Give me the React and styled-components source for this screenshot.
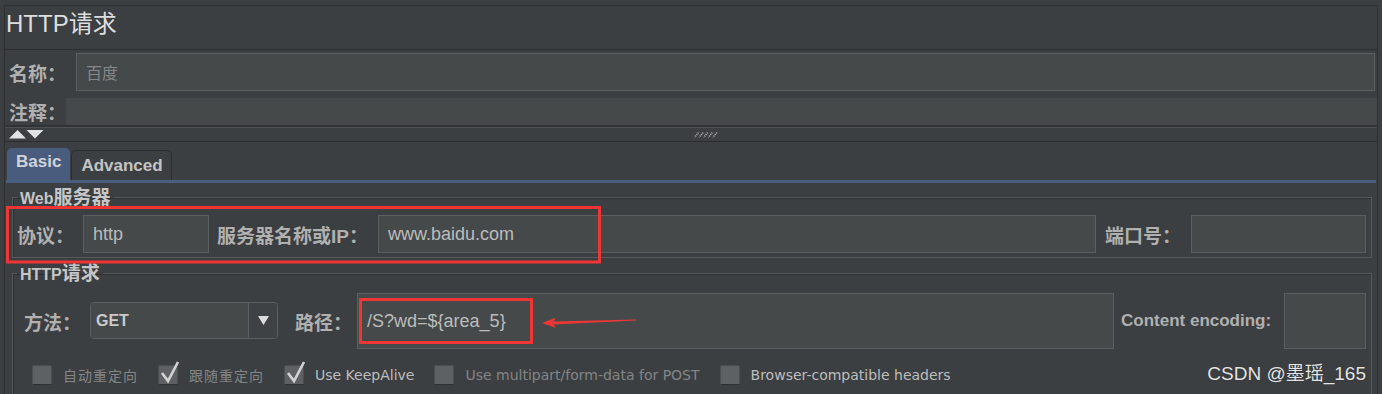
import React from 'react';
import styled, { createGlobalStyle } from 'styled-components';

const SANS = `"Liberation Sans", "Noto Sans CJK SC", sans-serif`;
const DEJA = `"DejaVu Sans", "Noto Sans CJK SC", sans-serif`;

const Global = createGlobalStyle`
  html, body { margin: 0; padding: 0; background: #3c3f41; }
  #root { width: 1382px; height: 394px; overflow: hidden; }
  *, *::before, *::after { box-sizing: border-box; }
`;

const Root = styled.div`
  position: relative;
  width: 1382px;
  height: 394px;
  overflow: hidden;
  background: #3c3f41;
  padding: 5px 4px 0 4px;
  font-family: ${SANS};
  color: #bbbbbb;
`;

const Frame = styled.div`
  height: 100%;
  border-top: 1px solid #2d2f31;
  border-left: 1px solid #2d2f31;
  border-right: 1px solid #2d2f31;
`;

const Title = styled.h1`
  margin: 0;
  height: 43px;
  padding: 0 0 7px 1px;
  font-size: 24px;
  line-height: 36px;
  font-weight: normal;
  color: #dedede;
`;

const NamePanel = styled.div`
  display: flex;
  flex-direction: column;
  gap: 7px;
  padding: 3px 0 0;
  border-top: 1px solid #2c2e30;
  border-bottom: 2px solid #303234;
  box-shadow: 0 1px 0 #4e5153;
`;

const NameRow = styled.div`
  display: flex;
  height: ${(p) => p.$h}px;
  padding-right: ${(p) => p.$pr || 0}px;
`;

const Label = styled.label`
  flex: none;
  width: ${(p) => p.$w}px;
  margin-left: ${(p) => p.$ml || 0}px;
  padding-left: ${(p) => p.$pl || 0}px;
  display: flex;
  align-items: center;
  font-size: ${(p) => p.$fs || 19}px;
  font-weight: bold;
  color: #b0b0b0;
  white-space: nowrap;
`;

const TextBox = styled.div`
  flex: ${(p) => (p.$w ? 'none' : '1')};
  width: ${(p) => (p.$w ? `${p.$w}px` : 'auto')};
  display: flex;
  align-items: center;
  padding-left: 9px;
  background: #45494a;
  border: 1px solid ${(p) => (p.$flat ? '#45494a' : '#5c5f60')};
  font-family: ${SANS};
  font-size: ${(p) => (p.$placeholder ? 16 : 18)}px;
  color: ${(p) => (p.$placeholder ? '#85888a' : '#bcbcbc')};
  white-space: nowrap;
`;

const SplitBar = styled.div`
  height: 14px;
  display: flex;
  align-items: flex-start;
  padding: 3px 0 0 4px;
`;

const Grip = styled.svg`
  margin: 2px 0 0 650px;
`;

const TabPane = styled.div`
  border-top: 1px solid #2b2d2f;
  padding-top: 6px;
`;

const TabStrip = styled.div`
  display: flex;
  align-items: flex-end;
  gap: 1px;
  height: 32px;
  padding-left: 2px;
`;

const Tab = styled.div`
  height: ${(p) => (p.$active ? 32 : 30)}px;
  padding: 0 8px ${(p) => (p.$active ? 5 : 0)}px ${(p) => (p.$active ? 8 : 9)}px;
  display: flex;
  align-items: center;
  border-radius: 5px 5px 0 0;
  background: ${(p) => (p.$active ? '#4a5c7e' : '#3c3f41')};
  border: 1px solid ${(p) => (p.$active ? '#4a5c7e' : '#2b2d2f')};
  border-bottom: none;
  font-size: 17px;
  font-weight: bold;
  color: ${(p) => (p.$active ? '#cfd3da' : '#c4c4c4')};
`;

const TabRule = styled.div`
  height: 3px;
  margin: 0 1px;
  background: #4a5e82;
`;

const TabBody = styled.div`
  padding: 3px 5px 0 7px;
`;

const Group = styled.fieldset`
  margin: ${(p) => p.$mt || 0}px 0 0;
  padding: ${(p) => p.$pt}px 5px ${(p) => p.$pb}px 4px;
  border: 1px solid #56595b;
  box-shadow: inset 1px 1px 0 #2e3032;
  min-width: 0;
`;

const Legend = styled.legend`
  display: block;
  height: 22px;
  padding: 0 3px;
  line-height: 22px;
  font-size: 16px;
  font-weight: bold;
  color: #c6c6c6;
  white-space: nowrap;
`;

const Han = styled.span`
  font-size: 19px;
  line-height: 1;
  font-family: "Noto Sans CJK SC", sans-serif;
`;

const Row = styled.div`
  display: flex;
  height: ${(p) => p.$h}px;
  padding-left: ${(p) => p.$pl || 0}px;
`;

const Select = styled.div`
  flex: none;
  align-self: center;
  display: flex;
  width: 188px;
  height: 37px;
  margin-top: -1px;
  border: 1px solid #5c5f61;
  border-radius: 4px;
  overflow: hidden;
`;

const SelectValue = styled.div`
  flex: 1;
  display: flex;
  align-items: center;
  padding-left: 5px;
  background: #45494a;
  font-size: 16px;
  font-weight: bold;
  color: #cacaca;
`;

const SelectButton = styled.div`
  width: 29px;
  display: flex;
  align-items: center;
  justify-content: center;
  border-left: 1px solid #5c5f61;
  background: #3f4244;
`;

const CheckRow = styled.div`
  display: flex;
  align-items: center;
  gap: 20px;
  margin-top: 16px;
  padding-left: 15px;
  height: 20px;
`;

const CheckItem = styled.div`
  display: flex;
  align-items: center;
  gap: 11px;
`;

const CheckText = styled.span`
  font-family: ${DEJA};
  font-size: 14px;
  letter-spacing: ${(p) => (p.$han ? 1 : 0)}px;
  color: ${(p) => (p.$dim ? '#838587' : '#bdbdbd')};
  white-space: nowrap;
`;

const Overlay = styled.svg`
  position: absolute;
  left: 0;
  top: 0;
  pointer-events: none;
`;

const Watermark = styled.div`
  position: absolute;
  right: 16px;
  top: 363px;
  font-family: ${SANS};
  font-size: 19px;
  line-height: 22px;
  color: #e4e4e4;
  text-shadow: 0 0 1px #222;
  white-space: nowrap;
`;

function Check({ checked }) {
  return (
    <svg width="20" height="20" viewBox="0 0 20 20" style={{ overflow: 'visible' }}>
      <rect x="0.5" y="0.5" width="19" height="19" rx="1" fill="#5e6163" stroke="#4b4e50" />
      <line x1="1" y1="19.5" x2="19.5" y2="19.5" stroke="#2f3133" />
      {checked && (
        <path d="M4 8 L10 16 L20 -3" fill="none" stroke="#d2d2d2" strokeWidth="2.6" strokeLinejoin="miter" />
      )}
    </svg>
  );
}

function CheckBox({ checked, dim, han, children }) {
  return (
    <CheckItem>
      <Check checked={checked} />
      <CheckText $dim={dim} $han={han}>{children}</CheckText>
    </CheckItem>
  );
}

export default function App() {
  return (
    <Root>
      <Global />
      <Frame>
        <Title>HTTP请求</Title>
        <NamePanel>
          <NameRow $h={38} $pr={2}>
            <Label $w={71} $pl={4}>名称：</Label>
            <TextBox $placeholder>百度</TextBox>
          </NameRow>
          <NameRow $h={27}>
            <Label $w={61} $pl={4}>注释：</Label>
            <TextBox $flat />
          </NameRow>
        </NamePanel>
        <SplitBar>
          <svg width="35" height="9" viewBox="0 0 35 9">
            <polygon points="0,8.5 8.5,0 17,8.5" fill="#e2e2e2" />
            <polygon points="17.5,0 34.5,0 26,8.5" fill="#e2e2e2" />
          </svg>
          <Grip width="24" height="6" viewBox="0 0 24 6">
            {[0, 1, 2, 3, 4].map((i) => (
              <line
                key={i}
                x1={i * 4.6 + 4.5}
                y1="0.5"
                x2={i * 4.6 + 0.5}
                y2="5.5"
                stroke="#a0a0a0"
                strokeWidth="1.6"
                strokeDasharray="1.2 0.8"
              />
            ))}
          </Grip>
        </SplitBar>
        <TabPane>
          <TabStrip>
            <Tab $active>Basic</Tab>
            <Tab>Advanced</Tab>
          </TabStrip>
          <TabRule />
          <TabBody>
            <Group $pt={7} $pb={4}>
              <Legend>
                Web<Han>服务器</Han>
              </Legend>
              <Row $h={38}>
                <Label $w={66}>协议：</Label>
                <TextBox $w={126}>http</TextBox>
                <Label $w={161} $ml={8}>服务器名称或IP：</Label>
                <TextBox>www.baidu.com</TextBox>
                <Label $w={86} $ml={9}>端口号：</Label>
                <TextBox $w={175} />
              </Row>
            </Group>
            <Group $mt={4} $pt={9} $pb={10}>
              <Legend>
                HTTP<Han>请求</Han>
              </Legend>
              <Row $h={56} $pl={7}>
                <Label $w={66}>方法：</Label>
                <Select>
                  <SelectValue>GET</SelectValue>
                  <SelectButton>
                    <svg width="11" height="9" viewBox="0 0 11 9">
                      <polygon points="0,0 11,0 5.5,9" fill="#dcdcdc" />
                    </svg>
                  </SelectButton>
                </Select>
                <Label $w={62} $ml={17}>路径：</Label>
                <TextBox>/S?wd=${'{'}area_5{'}'}</TextBox>
                <Label $w={163} $ml={7} $fs={17}>Content encoding:</Label>
                <TextBox $w={82} />
              </Row>
              <CheckRow>
                <CheckBox dim han>自动重定向</CheckBox>
                <CheckBox checked dim han>跟随重定向</CheckBox>
                <CheckBox checked>Use KeepAlive</CheckBox>
                <CheckBox dim>Use multipart/form-data for POST</CheckBox>
                <CheckBox>Browser-compatible headers</CheckBox>
              </CheckRow>
            </Group>
          </TabBody>
        </TabPane>
      </Frame>
      <Overlay width="1382" height="394" viewBox="0 0 1382 394">
        <rect x="7.5" y="207.5" width="592" height="54.5" fill="none" stroke="#f03535" strokeWidth="3" />
        <rect x="360.5" y="299.5" width="171" height="43" fill="none" stroke="#f03535" strokeWidth="3" />
        <polygon points="553,321.6 636,319.4 636,320.4 553,324.6" fill="#ee3636" />
        <polygon points="542,323 556,317.5 552.5,323 556,328" fill="#ee3636" />
      </Overlay>
      <Watermark>CSDN @墨瑶_165</Watermark>
    </Root>
  );
}
